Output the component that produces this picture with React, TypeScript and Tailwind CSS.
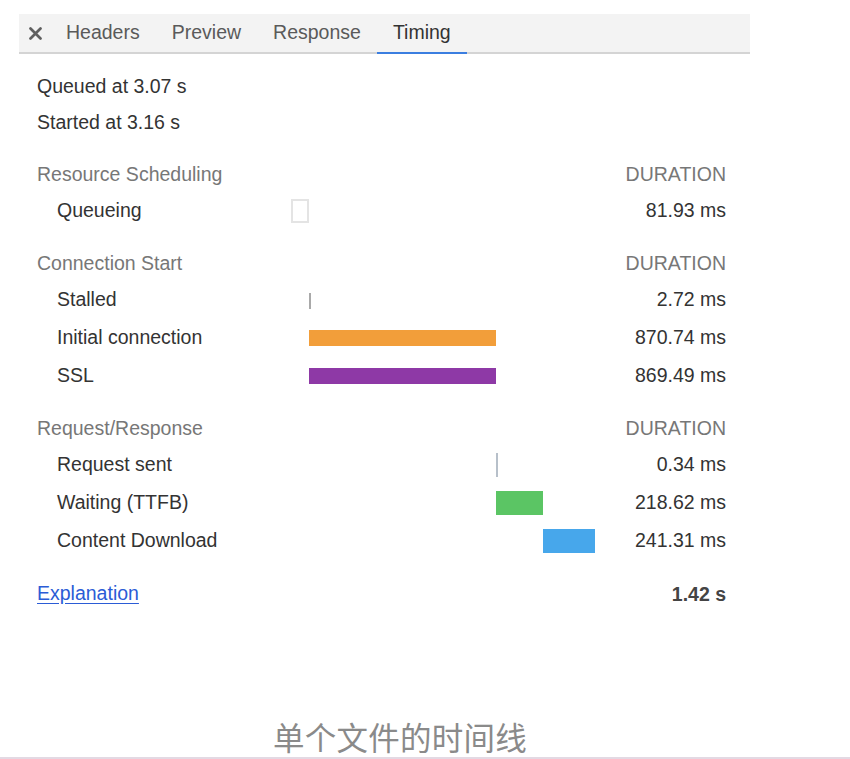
import React from 'react';

type Bar = {
    label: string;
    start: number;
    dur: number;
    kind: 'box' | 'tick' | 'thin' | 'thick';
    color: string;
    value: string;
};

const SCALE = 0.2148;

const sections: { title: string; rows: Bar[] }[] = [
    {
        title: 'Resource Scheduling',
        rows: [{ label: 'Queueing', start: 0, dur: 81.93, kind: 'box', color: '', value: '81.93 ms' }],
    },
    {
        title: 'Connection Start',
        rows: [
            { label: 'Stalled', start: 83.5, dur: 2.72, kind: 'tick', color: 'bg-[#a9a9a9]', value: '2.72 ms' },
            { label: 'Initial connection', start: 84.65, dur: 870.74, kind: 'thin', color: 'bg-[#f29e3a]', value: '870.74 ms' },
            { label: 'SSL', start: 84.65, dur: 869.49, kind: 'thin', color: 'bg-[#8e39a6]', value: '869.49 ms' },
        ],
    },
    {
        title: 'Request/Response',
        rows: [
            { label: 'Request sent', start: 955.39, dur: 0.34, kind: 'tick', color: 'bg-[#b7c0ca]', value: '0.34 ms' },
            { label: 'Waiting (TTFB)', start: 955.73, dur: 218.62, kind: 'thick', color: 'bg-[#5bc564]', value: '218.62 ms' },
            { label: 'Content Download', start: 1174.35, dur: 241.31, kind: 'thick', color: 'bg-[#47a7eb]', value: '241.31 ms' },
        ],
    },
];

const TimelineBar: React.FC<{ bar: Bar }> = ({ bar }) => {
    const left = bar.start * SCALE;
    const width = bar.dur * SCALE;
    if (bar.kind === 'box') {
        return (
            <div
                className="absolute top-1/2 -translate-y-1/2 h-[24px] border-2 border-[#e4e4e4] bg-white"
                style={{ left, width: Math.max(width, 2) }}
            />
        );
    }
    if (bar.kind === 'tick') {
        return (
            <div
                className={`absolute top-1/2 -translate-y-1/2 w-[2px] ${bar.color} ${bar.label === 'Stalled' ? 'h-[16px] mt-[1px]' : 'h-[24px]'}`}
                style={{ left }}
            />
        );
    }
    return (
        <div
            className={`absolute top-1/2 -translate-y-1/2 ${bar.color} ${bar.kind === 'thin' ? 'h-[16px]' : 'h-[24px]'}`}
            style={{ left, width }}
        />
    );
};

const tabs = ['Headers', 'Preview', 'Response', 'Timing'];

export default function App() {
    return (
        <div className="w-[850px] h-[759px] bg-white overflow-hidden flex flex-col text-[19.5px] text-[#333] font-['Liberation_Sans','Noto_Sans_CJK_SC',sans-serif]">
            <div className="ml-[19px] mt-[14px] w-[731px]">
                <div className="h-[40px] bg-[#f3f3f3] border-b-2 border-[#d4d4d4] flex items-start">
                    <div className="w-[31px] h-[38px] flex items-center justify-center">
                        <svg width="13" height="13" viewBox="0 0 13 13" className="ml-[1px]">
                            <path d="M1.5 1.5 L11.5 11.5 M11.5 1.5 L1.5 11.5" stroke="#5f5f5f" strokeWidth="2.7" strokeLinecap="round" />
                        </svg>
                    </div>
                    {tabs.map((t) => (
                        <div
                            key={t}
                            className={`h-[40px] px-4 flex items-center border-b-2 ${t === 'Timing' ? 'border-[#3b7ee0] text-[#333]' : 'border-transparent text-[#5a5a5a]'}`}
                        >
                            {t}
                        </div>
                    ))}
                </div>

                <div className="pl-[18px] pr-[24px] pt-[15px]">
                    <div className="h-[36px] flex items-center">Queued at 3.07 s</div>
                    <div className="h-[36px] flex items-center">Started at 3.16 s</div>

                    {sections.map((s) => (
                        <div key={s.title} className="mt-[17px]">
                            <div className="h-[34px] flex items-center justify-between text-[#777]">
                                <span>{s.title}</span>
                                <span>DURATION</span>
                            </div>
                            {s.rows.map((r) => (
                                <div key={r.label} className="h-[38px] flex items-center">
                                    <div className="w-[254px] pl-5">{r.label}</div>
                                    <div className="flex-1 relative h-full">
                                        <TimelineBar bar={r} />
                                    </div>
                                    <div className="w-[130px] text-right">{r.value}</div>
                                </div>
                            ))}
                        </div>
                    ))}

                    <div className="mt-[16px] h-[36px] flex items-center justify-between">
                        <a href="#" className="text-[#2b5cd6] underline underline-offset-[3px]">Explanation</a>
                        <span className="font-bold text-[#444] mt-[2px]">1.42 s</span>
                    </div>
                </div>
            </div>

            <div className="flex-1" />
            <div className="pl-[273px] text-[31.5px] tracking-[0.25px] leading-[36px] text-[#8a8a8a]">
                单个文件的时间线
            </div>
            <div className="h-[2px] bg-[#e3d9e3]" />
        </div>
    );
}
